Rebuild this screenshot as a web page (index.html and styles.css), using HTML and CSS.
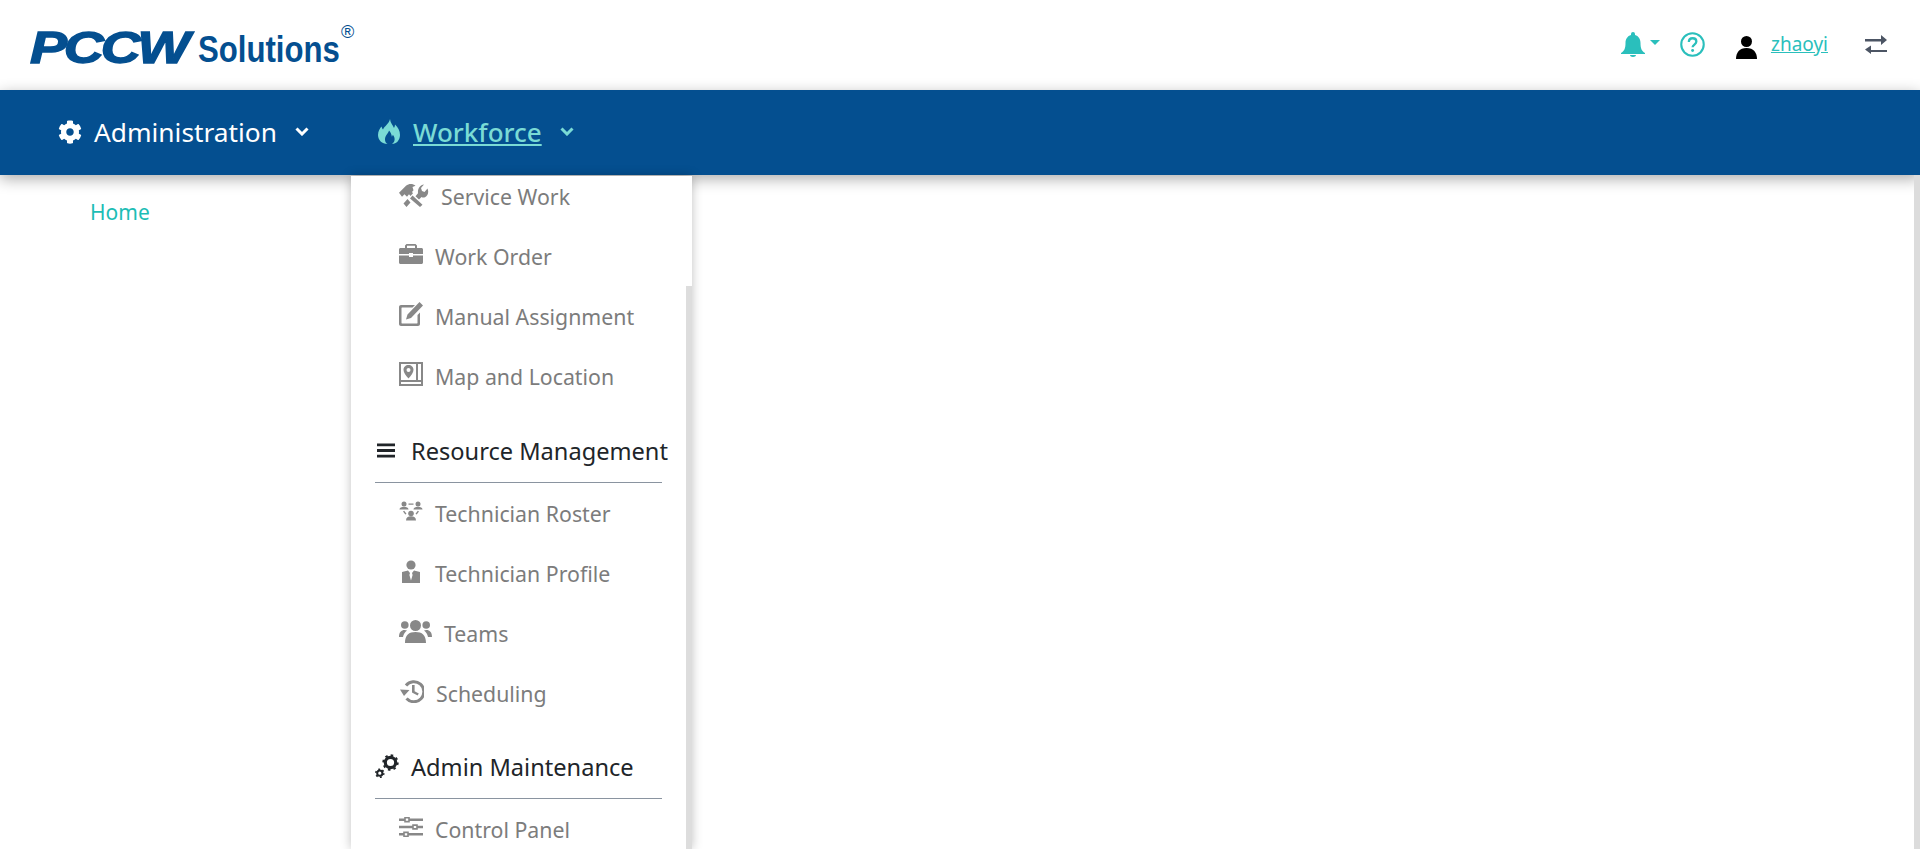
FILE: index.html
```html
<!DOCTYPE html>
<html lang="en">
  <head>
    <title>PCCW Solutions</title>
    <meta charset="UTF-8">
    <link rel="stylesheet" href="styles.css">
  </head>
  <body>
    <header class="topbar">
      <div class="logo">
        <span class="logo-pccw">PCCW</span>
        <span class="logo-sol">Solutions</span>
        <span class="logo-reg">®</span>
      </div>
      <div class="tools">
        <svg class="ic-bell" viewBox="0 0 24 25"><path d="M12 0a2 2 0 0 1 2 2v1c3.500 1 5.500 4 5.500 8 0 5 1 8 4.500 10v1H0v-1c3.500-2 4.500-5 4.500-10 0-4 2-7 5.500-8V2a2 2 0 0 1 2-2zM9 23h6c0 1.200-1.300 2-3 2s-3-.8-3-2z"/></svg>
        <span class="caret"></span>
        <svg class="ic-help" viewBox="0 0 24 24"><circle class="ic-help-ring" cx="12" cy="12" r="10.800"/><path class="ic-help-mark" d="M8.500 9.500c0-2.200 1.600-3.500 3.600-3.500s3.600 1.300 3.600 3.200c0 2.800-3.600 2.900-3.600 5.500"/><circle cx="12.100" cy="17.700" r="1.400"/></svg>
        <svg class="ic-user" viewBox="0 0 21 23"><circle cx="10.500" cy="5.500" r="5.500"/><path d="M0 23c0-6.500 3.500-11 10.500-11S21 16.500 21 23z"/></svg>
        <a class="username" href="#">zhaoyi</a>
        <svg class="ic-swap" viewBox="0 0 22 19"><path d="M0 4h16V0l6 5-6 5V6.500H0zM22 15H6v-4.500L0 14.500 6 19v-2h16z"/></svg>
      </div>
    </header>

    <nav class="mainnav">
      <a class="nav-item nav-admin" href="#">
        <svg class="nav-ic" viewBox="0 0 512 512"><path d="M487.4 315.7l-42.6-24.6c4.3-23.2 4.3-47 0-70.2l42.6-24.6c4.9-2.8 7.1-8.6 5.5-14-11.1-35.6-30-67.8-54.7-94.6-3.8-4.1-10-5.1-14.8-2.3L380.8 110c-17.9-15.4-38.5-27.3-60.8-35.1V25.8c0-5.6-3.9-10.5-9.4-11.7-36.7-8.2-74.3-7.8-109.2 0-5.5 1.2-9.4 6.1-9.4 11.7V75c-22.2 7.9-42.8 19.8-60.8 35.1L88.7 85.5c-4.9-2.8-11-1.9-14.8 2.3-24.7 26.7-43.6 58.9-54.7 94.6-1.7 5.4.6 11.2 5.5 14L67.3 221c-4.3 23.2-4.3 47 0 70.2l-42.6 24.6c-4.9 2.8-7.1 8.6-5.5 14 11.1 35.6 30 67.8 54.7 94.6 3.8 4.1 10 5.1 14.8 2.3l42.6-24.6c17.9 15.4 38.5 27.3 60.8 35.1v49.2c0 5.6 3.9 10.5 9.4 11.7 36.7 8.2 74.3 7.8 109.2 0 5.5-1.2 9.4-6.1 9.4-11.7v-49.2c22.2-7.9 42.8-19.8 60.8-35.1l42.6 24.6c4.9 2.8 11 1.9 14.8-2.3 24.7-26.7 43.6-58.9 54.7-94.6 1.5-5.5-.7-11.3-5.6-14.1zM256 336c-44.1 0-80-35.9-80-80s35.9-80 80-80 80 35.9 80 80-35.9 80-80 80z"/></svg>
        <span>Administration</span>
        <svg class="chev" viewBox="0 0 14 9"><path d="M1.500 1.500L7 7l5.500-5.500"/></svg>
      </a>
      <a class="nav-item nav-active" href="#">
        <svg class="nav-ic ic-fire" viewBox="0 0 22 25"><path d="M12 0c.3 4 3 6 4 9 .7-1 1-2.300 1-3.500 3 2.500 5 6.500 5 10.500 0 5-3.500 9-8 9 2-1.500 3-3.500 2.500-6-.3-1.500-1-2.500-1.600-3.300l-1 2c-.3-2.500-1.400-4.700-2.900-6.200-.5 2.500-4 5-4 9 0 2 1 3.500 2.500 4.500C4 25 0 21 0 16c0-4 2-6.500 3.500-8.500.3 1.300.8 2.300 1.500 3C6.500 7 11 5 12 0z"/></svg>
        <span class="nav-label">Workforce</span>
        <svg class="chev" viewBox="0 0 14 9"><path d="M1.500 1.500L7 7l5.500-5.500"/></svg>
      </a>
    </nav>

    <main class="content">
      <a class="home" href="#">Home</a>
    </main>

    <div class="dropdown">
      <div class="scrollthumb"></div>
      <ul class="menu">
        <li class="row gap-wide">
          <svg class="ic" viewBox="0 0 30 20" preserveAspectRatio="none"><path d="M0 7.500L7 1.500C10 -.500 14 -.300 16.500 1.500L13.500 2.500 14.500 5.500 13 7 14 8 11.500 10.500 10 9 8 11 5.500 9 3 11zM11 12.500L13.500 10 23.500 18 21 20zM8.500 13L11.500 16 7.500 20 4.500 17zM25 .500L22 3.500 23 6 25.500 7 28.500 4C30 7 29 10.500 26 11.500 24.500 12 23.500 11.800 22.500 11.300L20 13.500 16.500 10.700 19 8C18.500 4 21 1 25 .500z"/></svg>
          <span>Service Work</span>
        </li>
        <li class="row">
          <svg class="ic" viewBox="0 0 24 20"><path d="M7.500 0h9L18 1.500V4h4.500c.800 0 1.500.700 1.500 1.500V10H14V9h-4v1H0V5.500C0 4.700.7 4 1.500 4H6V1.500zM8 1.800V4h8V1.800zM0 11.500h10V13h4v-1.500h10v7c0 .800-.7 1.500-1.500 1.500h-21C.7 20 0 19.300 0 18.500z"/></svg>
          <span>Work Order</span>
        </li>
        <li class="row">
          <svg class="ic ic-tall" viewBox="0 0 24 24"><path d="M2 3h14l-2.500 2.500H3c-.300 0-.500.200-.500.500v15c0 .300.200.500.500.500h15c.300 0 .500-.200.500-.500v-8L21 10.500V22c0 1.100-.900 2-2 2H2c-1.100 0-2-.900-2-2V5c0-1.100.900-2 2-2zM20.500 0L24 3.500 12 16l-5 1.500L8.500 12.500z"/></svg>
          <span>Manual Assignment</span>
        </li>
        <li class="row">
          <svg class="ic ic-tall" viewBox="0 0 24 24"><path fill-rule="evenodd" d="M0 0h24v24H0zM2 2v16h15V2zM19 2v16h3V2zM2 20v2h20v-2zM9.500 3c2.800 0 5 2.100 5 4.800 0 2.400-2.200 5.700-5 8.700-2.800-3-5-6.300-5-8.700C4.500 5.100 6.700 3 9.500 3zm0 3a2 2 0 1 0 0 4 2 2 0 0 0 0-4z"/></svg>
          <span>Map and Location</span>
        </li>

        <li class="heading heading-first">
          <svg class="ic-bars" viewBox="0 0 19 15"><path d="M0 0h19v3H0zM0 6h19v3H0zM0 12h19v3H0z"/></svg>
          <span>Resource Management</span>
        </li>
        <li class="row">
          <svg class="ic" viewBox="0 0 24 19"><circle cx="5" cy="2.500" r="2.500"/><circle cx="19" cy="2.500" r="2.500"/><circle cx="12" cy="12" r="2.800"/><path d="M.5 8c0-2 2-2.800 4.500-2.800S9.500 6 9.500 8zM14.500 8c0-2 2-2.800 4.500-2.800S23.500 6 23.500 8zM7 19c0-3 2-4.300 5-4.300s5 1.300 5 4.300zM9.500 2h5v1.300h-5zM4 10l1.200-.8 2.300 3-1.200.8zM20 10l-1.200-.8-2.300 3 1.200.8z"/></svg>
          <span>Technician Roster</span>
        </li>
        <li class="row">
          <svg class="ic ic-profile" viewBox="0 0 18 23"><circle cx="9" cy="5" r="4.600"/><path d="M0 12l6-1.500L8 13l-.6 2L9 20.500l1.600-5.500-.6-2 2-2.500 6 1.500v11H0z"/></svg>
          <span>Technician Profile</span>
        </li>
        <li class="row gap-team">
          <svg class="ic ic-wide" viewBox="0 0 33 23"><circle cx="16.500" cy="5.500" r="5.500"/><circle cx="5.800" cy="5" r="3.800"/><circle cx="27.200" cy="5" r="3.800"/><path d="M6 23c0-8 4-11 10.500-11S27 15 27 23zM0 17c0-5 2.500-7 5.500-7 1.200 0 2 .2 2.500.5-2 1.500-3.500 3.500-4 6.500zM33 17c0-5-2.500-7-5.500-7-1.200 0-2 .2-2.500.5 2 1.500 3.500 3.500 4 6.500z"/></svg>
          <span>Teams</span>
        </li>
        <li class="row gap-sched">
          <svg class="ic" viewBox="0 0 25 23"><path fill="none" stroke="#888" stroke-width="3" d="M7 5.500A10 10 0 1 1 7.500 18.500"/><path d="M1 9.500l9.500.5-5.500 6zM13 5h2.600v6.200l4.200 2.200-1.200 2.200-5.600-3z"/></svg>
          <span>Scheduling</span>
        </li>

        <li class="heading">
          <svg class="ic-gears" viewBox="0 0 24 24"><g fill="none" stroke="#212529"><circle cx="15.500" cy="8.500" r="5.200" stroke-width="3.200"/><circle cx="15.500" cy="8.500" r="7.200" stroke-width="2" stroke-dasharray="2.500 3.150"/><circle cx="4.800" cy="19.200" r="2.600" stroke-width="2"/><circle cx="4.800" cy="19.200" r="4" stroke-width="1.600" stroke-dasharray="1.800 2.400"/></g></svg>
          <span>Admin Maintenance</span>
        </li>
        <li class="row">
          <svg class="ic" viewBox="0 0 24 20"><path d="M0 1.500h24v2.400H0zM0 8.800h24v2.400H0zM0 16.100h24v2.400H0z"/><path fill="#fff" stroke="#888" stroke-width="1.600" d="M6 .8h4v3.800H6zM14 8.100h4v3.800h-4zM5 15.400h4v3.800H5z"/></svg>
          <span>Control Panel</span>
        </li>
      </ul>
    </div>

    <div class="page-scroll"></div>
  </body>
</html>
```

FILE: styles.css
```css
:root {
  --font-body: "Noto Sans", sans-serif;
  --color-blue: #044f90;
  --color-teal: #2abfbc;
  --color-muted: #7c7c7c;
  --color-icon: #888;
  --color-heading: #212529;
}

html, body {
  height: 100%;
  overflow: hidden;
}

body {
  margin: 0;
  font-family: var(--font-body);
  background-color: #fff;
}

ul {
  list-style: none;
  margin: 0;
  padding: 0;
}

a {
  text-decoration: none;
}

/* top bar */
.topbar {
  height: 90px;
  box-sizing: border-box;
  padding: 0 33px 0 30px;
  display: flex;
  align-items: center;
  justify-content: space-between;
}

.logo {
  display: flex;
  align-items: flex-start;
  height: 90px;
  color: var(--color-blue);
  font-family: "Liberation Sans", Arial, sans-serif;
  font-weight: 700;
  white-space: nowrap;
}

.logo-pccw {
  width: 168px;
  margin-top: 23px;
  font-size: 44px;
  line-height: 50px;
  font-style: italic;
  letter-spacing: -2.500px;
  -webkit-text-stroke: 1.400px var(--color-blue);
  transform: scaleX(1.260);
  transform-origin: left center;
}

.logo-sol {
  width: 143px;
  margin-top: 29px;
  font-size: 36px;
  line-height: 42px;
  transform: scaleX(.865);
  transform-origin: left center;
}

.logo-reg {
  margin-top: 22px;
  font-size: 18px;
  line-height: 20px;
  font-weight: 400;
}

.tools {
  display: flex;
  align-items: center;
  height: 24px;
  margin-top: -2px;
}

.ic-bell {
  width: 24px;
  height: 25px;
  fill: var(--color-teal);
}

.caret {
  width: 0;
  height: 0;
  margin: 0 0 3px 5px;
  border-left: 5.500px solid transparent;
  border-right: 5.500px solid transparent;
  border-top: 5.500px solid var(--color-teal);
}

.ic-help {
  width: 25px;
  height: 25px;
  margin-left: 20px;
  fill: var(--color-teal);
}

.ic-help-ring,
.ic-help-mark {
  fill: none;
  stroke: var(--color-teal);
  stroke-width: 2;
}

.ic-help-mark {
  stroke-width: 2.200;
}

.ic-user {
  width: 21px;
  height: 23px;
  margin: 6px 0 0 31px;
  fill: #000;
}

.username {
  margin-left: 14px;
  font-size: 19px;
  line-height: 24px;
  color: var(--color-teal);
  text-decoration: underline;
}

.ic-swap {
  width: 22px;
  height: 19px;
  margin-left: 37px;
  fill: #4c5564;
}

/* blue nav */
.mainnav {
  height: 85px;
  box-sizing: border-box;
  padding: 0 0 2px 58px;
  display: flex;
  align-items: center;
  background-color: var(--color-blue);
  box-shadow: 0 4px 14px rgba(0, 0, 0, .32);
  position: relative;
}

.nav-item {
  display: flex;
  align-items: center;
  font-size: 26px;
  line-height: 32px;
  color: #fff;
}

.nav-admin {
  width: 320px;
  font-size: 26.300px;
}

.nav-ic {
  width: 24px;
  height: 24px;
  margin-right: 12px;
  fill: currentColor;
}

.ic-fire {
  width: 22px;
  height: 25px;
  margin-right: 13px;
}

.chev {
  width: 14px;
  height: 9px;
  margin-left: 18px;
  fill: none;
  stroke: currentColor;
  stroke-width: 3;
}

.nav-active {
  color: #7adbd5;
}

.nav-label {
  font-weight: 500;
  text-decoration: underline;
}

/* page body */
.content {
  padding: 21px 0 0 90px;
}

.home {
  font-size: 21px;
  line-height: 32px;
  color: #1cbdb5;
}

/* open dropdown */
.dropdown {
  position: absolute;
  top: 176px;
  left: 351px;
  width: 341px;
  height: 673px;
  overflow: hidden;
  background-color: #fff;
  box-shadow: 0 0 10px rgba(0, 0, 0, .25);
}

.scrollthumb {
  position: absolute;
  top: 110px;
  right: 0;
  bottom: 0;
  width: 6px;
  background-color: #ddd;
}

.page-scroll {
  position: absolute;
  top: 175px;
  right: 0;
  bottom: 0;
  width: 6px;
  background-color: #dcdcdc;
}

.menu {
  margin-top: -10px;
  padding: 0 24px;
}

.row {
  height: 60px;
  padding-left: 24px;
  display: flex;
  align-items: center;
  font-size: 21.300px;
  color: var(--color-muted);
}

.ic {
  width: 24px;
  height: 20px;
  margin: -4px 12px 0 0;
  flex-shrink: 0;
  fill: var(--color-icon);
}

.ic-tall {
  height: 24px;
}

.ic-profile {
  width: 18px;
  height: 23px;
  margin-left: 3px;
  margin-right: 15px;
}

.ic-wide {
  width: 33px;
  height: 23px;
  margin-right: 12px;
}

.gap-wide .ic {
  width: 30px;
  height: 23px;
  margin: -1px 12px 0 0;
}

.gap-sched .ic {
  width: 25px;
  height: 23px;
  margin-right: 12px;
}

.heading {
  box-sizing: border-box;
  height: 46px;
  margin: 30px 0 0;
  padding-bottom: 17px;
  width: 287px;
  display: flex;
  align-items: center;
  font-size: 23.600px;
  line-height: 28px;
  white-space: nowrap;
  color: var(--color-heading);
  border-bottom: 1px solid #8a94a0;
}

.heading-first {
  margin-top: 31px;
}

.ic-bars {
  width: 18px;
  height: 15px;
  margin: -2px 16px 0 2px;
  flex-shrink: 0;
  fill: var(--color-heading);
}

.ic-gears {
  width: 24px;
  height: 24px;
  margin: -3px 12px 0 0;
  flex-shrink: 0;
}
```
